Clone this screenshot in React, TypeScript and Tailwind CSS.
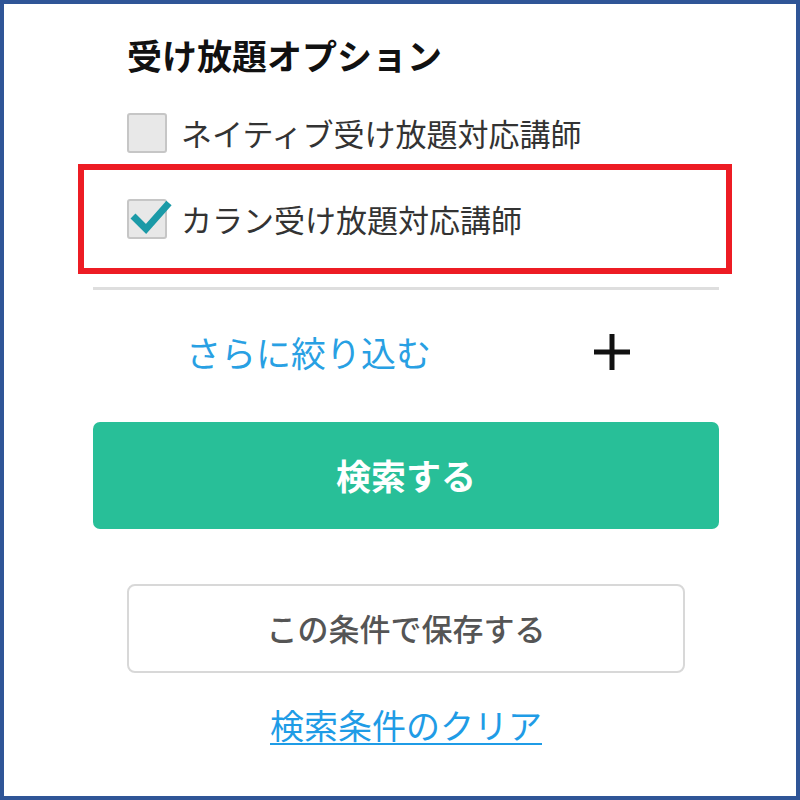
import React from "react";

const font = { fontFamily: '"Noto Sans CJK JP", "Noto Sans", sans-serif' };

function Checkbox({ checked }: { checked?: boolean }) {
  return (
    <span className="relative inline-block w-[40px] h-[40px] shrink-0 rounded-[3px] border-2 border-[#c6c6c6] bg-[#e8e8e8]">
      {checked && (
        <svg
          className="absolute left-[-2px] top-[-2px] overflow-visible"
          width="44"
          height="40"
          viewBox="0 0 44 40"
        >
          <polyline
            points="6,17 19,30 42,4"
            fill="none"
            stroke="#1b9aa7"
            strokeWidth="7"
          />
        </svg>
      )}
    </span>
  );
}

export default function App() {
  return (
    <div
      className="w-[800px] h-[800px] box-border border-4 border-[#2f5597] bg-white overflow-hidden"
      style={font}
    >
      <div className="ml-[89px] w-[626px] flex flex-col">
        {/* Title */}
        <h2 className="mt-[31px] pl-[34px] h-[40px] leading-[40px] text-[35px] font-bold text-[#111]">
          受け放題オプション
        </h2>

        {/* Option 1 */}
        <label className="mt-[38px] pl-[34px] flex items-center h-[40px] gap-[14px]">
          <Checkbox />
          <span className="text-[31px] leading-[40px] text-[#333]">ネイティブ受け放題対応講師</span>
        </label>

        {/* Option 2 (highlighted) */}
        <div className="mt-[11px] ml-[-15px] w-[654px] border-[6px] border-[#ed1c24] pt-[29px] pb-[29px] pl-[43px]">
          <label className="flex items-center h-[40px] gap-[14px]">
            <Checkbox checked />
            <span className="text-[31px] leading-[40px] text-[#333]">カラン受け放題対応講師</span>
          </label>
        </div>

        <div className="mt-[13px] h-[3px] bg-[#dedede]" />

        {/* Narrow down */}
        <div className="mt-[42px] h-[40px] flex items-center pl-[93px] pr-[89px]">
          <span className="text-[35px] leading-[40px] text-[#28a0e3]">さらに絞り込む</span>
          <svg className="ml-auto" width="36" height="36" viewBox="0 0 36 36">
            <line x1="0" y1="18" x2="36" y2="18" stroke="#111" strokeWidth="5" />
            <line x1="18" y1="0" x2="18" y2="36" stroke="#111" strokeWidth="5" />
          </svg>
        </div>

        {/* Search */}
        <button className="mt-[50px] h-[107px] w-full rounded-[7px] bg-[#28bf98] text-white text-[35px] font-bold">
          検索する
        </button>

        {/* Save */}
        <button className="mt-[55px] mx-auto h-[89px] w-[558px] rounded-[8px] border-2 border-[#d8d8d8] bg-white text-[31px] font-medium text-[#555]">
          この条件で保存する
        </button>

        {/* Clear */}
        <a
          href="#"
          className="mt-[32px] self-center h-[40px] leading-[40px] text-[34px] text-[#1f9ce6] underline decoration-[2px] underline-offset-[4px]"
        >
          検索条件のクリア
        </a>
      </div>
    </div>
  );
}
